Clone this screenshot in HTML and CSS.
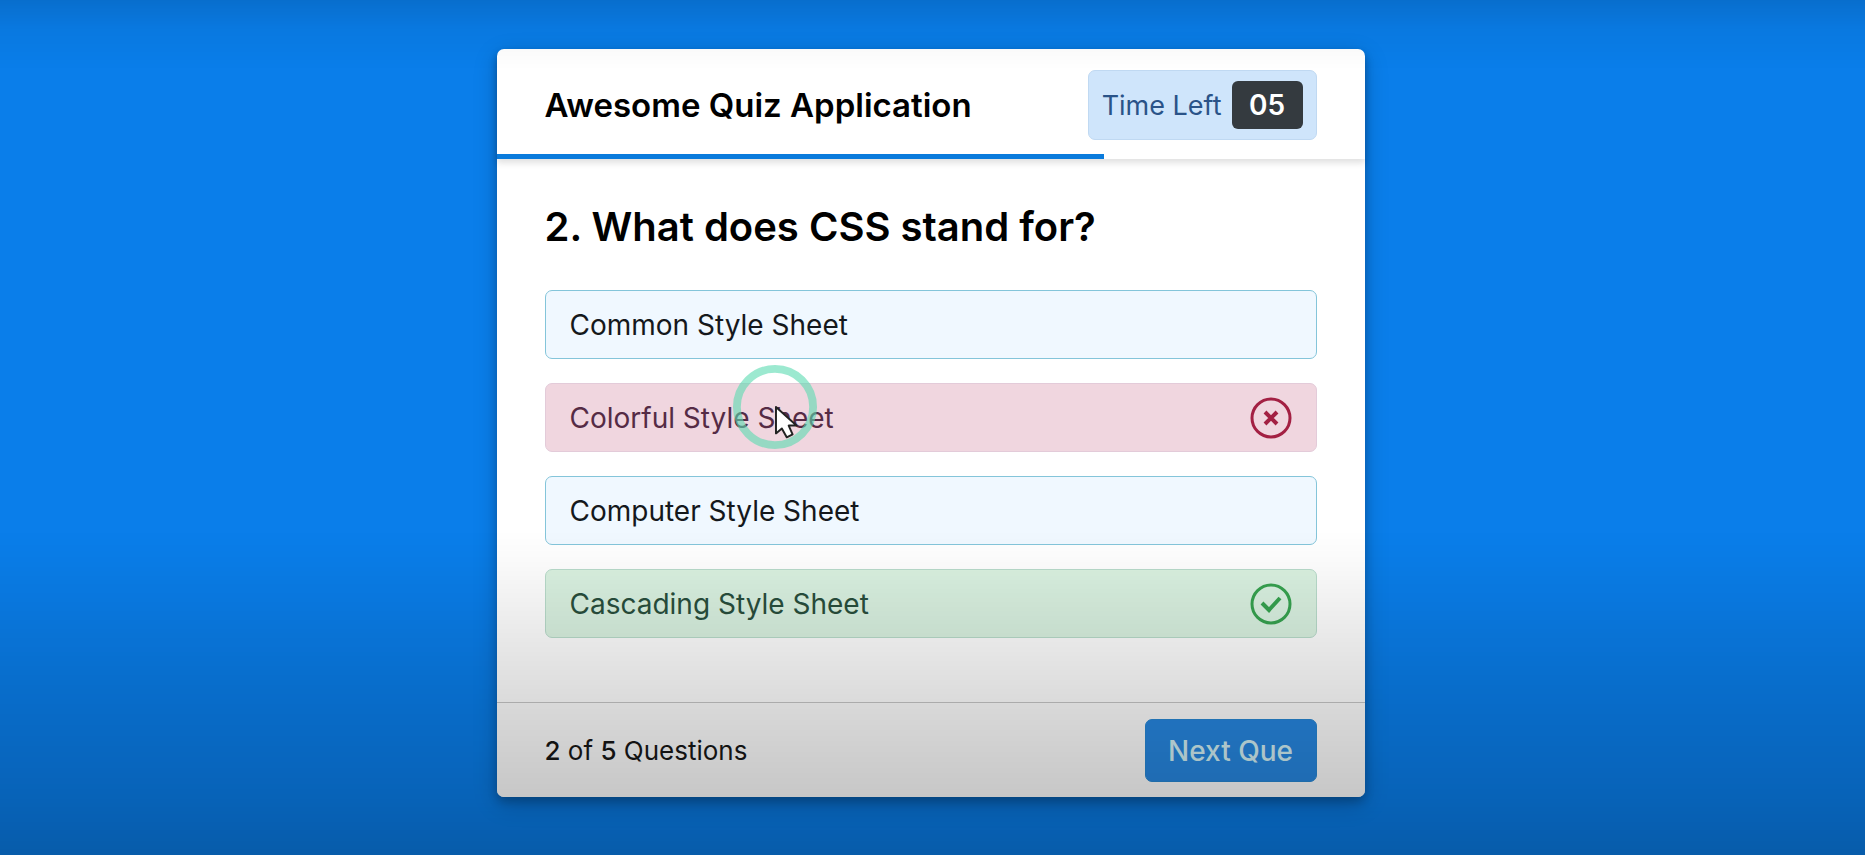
FILE: index.html
```html
<!DOCTYPE html>
<html lang="en">
<head>
<meta charset="utf-8">
<meta name="viewport" content="width=device-width, initial-scale=1">
<title>Awesome Quiz Application</title>
<link rel="stylesheet" href="styles.css">
</head>
<body>
<main class="quiz">
  <header class="quiz-header">
    <div class="header-row">
      <h1 class="title">Awesome Quiz Application</h1>
      <div class="timer">
        <span class="timer-label">Time Left</span>
        <span class="timer-value">05</span>
      </div>
    </div>
    <div class="time-line"></div>
  </header>
  <section class="quiz-body">
    <h2 class="question">2. What does CSS stand for?</h2>
    <div class="options">
      <button type="button" class="option">Common Style Sheet</button>
      <button type="button" class="option incorrect">Colorful Style Sheet
        <svg class="mark" viewBox="0 0 42 42" aria-hidden="true"><circle cx="21" cy="21" r="19"/><path d="M15 15l12 12M27 15l-12 12" stroke-width="4"/></svg>
        <svg class="pointer" viewBox="0 0 88 88" aria-hidden="true">
          <circle class="pointer-ring" cx="44" cy="44" r="39"/>
          <path class="pointer-arrow" d="M45 44v27l6-5 5 9 6-3-4-9h8z"/>
        </svg>
      </button>
      <button type="button" class="option">Computer Style Sheet</button>
      <button type="button" class="option correct">Cascading Style Sheet
        <svg class="mark" viewBox="0 0 42 42" aria-hidden="true"><circle cx="21" cy="21" r="19"/><path d="M12 20l7 7 11-12" stroke-width="4"/></svg>
      </button>
    </div>
  </section>
  <footer class="quiz-footer">
    <p class="count"><b>2</b> of <b>5</b> Questions</p>
    <button type="button" class="next">Next Que</button>
  </footer>
</main>
</body>
</html>
```
FILE: styles.css
```css
* {
  box-sizing: border-box;
  margin: 0;
}

body {
  min-height: 100vh;
  display: flex;
  align-items: center;
  justify-content: center;
  padding: 0 4px 9px 0;
  background: #0a7eea;
  font-family: Inter, "Open Sans", sans-serif;
  color: #000;
}

/* Shading along the top and bottom edges of the window */
body::after {
  content: "";
  position: fixed;
  inset: 0;
  pointer-events: none;
  background:
    linear-gradient(to bottom, rgba(0, 0, 0, .12), rgba(0, 0, 0, .04) 30px, transparent 70px),
    linear-gradient(to top, rgba(0, 0, 0, .27), rgba(0, 0, 0, .21) 58px, rgba(0, 0, 0, .14) 154px, rgba(0, 0, 0, .09) 215px, rgba(0, 0, 0, .02) 295px, transparent 325px);
}

.quiz {
  width: 100%;
  max-width: 868px;
  background: #fff;
  border-radius: 7px;
  box-shadow: 0 5px 10px rgba(0, 0, 0, .2), 0 7px 24px rgba(0, 0, 0, .2);
}

.quiz-header {
  border-radius: 7px 7px 0 0;
  box-shadow: 0 4px 6px rgba(0, 0, 0, .12);
}

.header-row {
  display: flex;
  align-items: center;
  justify-content: space-between;
  padding: 21px 48px 14px;
}

.title {
  font-size: 33px;
  font-weight: 600;
  line-height: 40px;
}

.timer {
  display: flex;
  align-items: center;
  gap: 10px;
  padding: 10px 13px;
  background: #cfe5fb;
  border: 1px solid #c0d9f2;
  border-radius: 7px;
}

.timer-label {
  font-size: 27px;
  color: #2a5388;
}

.timer-value {
  min-width: 71px;
  background: #343a3f;
  border-radius: 6px;
  color: #fff;
  font-size: 28px;
  font-weight: 600;
  line-height: 48px;
  text-align: center;
}

.time-line {
  width: 70%;
  height: 5px;
  background: #0a7bdc;
}

.quiz-body {
  padding: 44px 48px 64px;
}

.question {
  margin-bottom: 39px;
  font-size: 40px;
  font-weight: 600;
  line-height: 48px;
}

.options {
  display: flex;
  flex-direction: column;
  gap: 24px;
}

.option {
  position: relative;
  display: flex;
  align-items: center;
  justify-content: space-between;
  min-height: 69px;
  padding: 8px 24px;
  background: #f0f8ff;
  border: 1px solid #84c5da;
  border-radius: 7px;
  color: #15181c;
  font-family: inherit;
  font-size: 28px;
  text-align: left;
}

.incorrect {
  background: #f0d6df;
  border-color: #e3cbd9;
  color: #552b45;
}

.correct {
  background: #daf2e1;
  border-color: #b9dccb;
  color: #294f3d;
}

.mark {
  width: 42px;
  height: 42px;
  fill: none;
  stroke-width: 3;
}

.incorrect .mark {
  stroke: #a32043;
}

.correct .mark {
  stroke: #37a350;
}

.pointer {
  position: absolute;
  left: 186px;
  top: -20px;
  width: 86px;
  height: 86px;
}

.pointer-ring {
  fill: none;
  stroke: rgba(90, 218, 176, .6);
  stroke-width: 8;
}

.pointer-arrow {
  fill: #fff;
  stroke: #222;
  stroke-width: 2;
  stroke-linejoin: round;
}

.quiz-footer {
  display: flex;
  align-items: center;
  justify-content: space-between;
  padding: 16px 48px 15px;
  border-top: 1px solid #c8c8c8;
  background: #fdfdfd;
  border-radius: 0 0 7px 7px;
}

.count {
  color: #181818;
  font-size: 26px;
}

.count b {
  font-weight: 500;
}

.next {
  min-width: 172px;
  min-height: 63px;
  background: #2787e0;
  border: 1px solid #2787d4;
  border-radius: 7px;
  color: #d2f0f4;
  font-family: inherit;
  font-size: 28px;
  font-weight: 500;
}
```
